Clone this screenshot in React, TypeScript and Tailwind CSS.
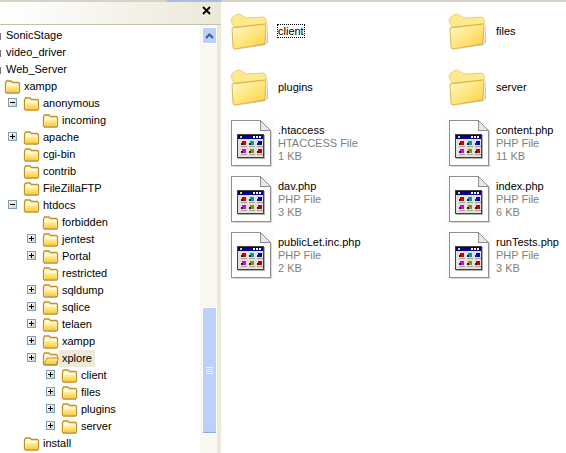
import React from "react";

type Row = { t: string; d: number; box?: "+" | "-"; open?: boolean; sel?: boolean; none?: boolean };
const rows: Row[] = [
  { t: "SonicStage", d: -1, none: true },
  { t: "video_driver", d: -1, none: true },
  { t: "Web_Server", d: -1, none: true },
  { t: "xampp", d: 0 },
  { t: "anonymous", d: 1, box: "-" },
  { t: "incoming", d: 2 },
  { t: "apache", d: 1, box: "+" },
  { t: "cgi-bin", d: 1 },
  { t: "contrib", d: 1 },
  { t: "FileZillaFTP", d: 1 },
  { t: "htdocs", d: 1, box: "-" },
  { t: "forbidden", d: 2 },
  { t: "jentest", d: 2, box: "+" },
  { t: "Portal", d: 2, box: "+" },
  { t: "restricted", d: 2 },
  { t: "sqldump", d: 2, box: "+" },
  { t: "sqlice", d: 2, box: "+" },
  { t: "telaen", d: 2, box: "+" },
  { t: "xampp", d: 2, box: "+" },
  { t: "xplore", d: 2, box: "+", open: true, sel: true },
  { t: "client", d: 3, box: "+" },
  { t: "files", d: 3, box: "+" },
  { t: "plugins", d: 3, box: "+" },
  { t: "server", d: 3, box: "+" },
  { t: "install", d: 1 },
];

const tiles = [
  { n: "client", folder: true, focus: true },
  { n: "files", folder: true },
  { n: "plugins", folder: true },
  { n: "server", folder: true },
  { n: ".htaccess", k: "HTACCESS File", s: "1 KB" },
  { n: "content.php", k: "PHP File", s: "11 KB" },
  { n: "dav.php", k: "PHP File", s: "3 KB" },
  { n: "index.php", k: "PHP File", s: "6 KB" },
  { n: "publicLet.inc.php", k: "PHP File", s: "2 KB" },
  { n: "runTests.php", k: "PHP File", s: "3 KB" },
];

function SmallFolder({ open }: { open?: boolean }) {
  return (
    <svg width="17" height="14" viewBox="0 0 17 14" className="shrink-0">
      <defs>
        <linearGradient id="sf" x1="0" y1="0" x2="0" y2="1">
          <stop offset="0" stopColor="#fff0a0" />
          <stop offset="1" stopColor="#fccb3e" />
        </linearGradient>
      </defs>
      <path d="M1.5 3 L2.5 1 H7 L8.5 2.5 H14.5 L15.5 3.5 V12 L14.5 13 H2.5 L1.5 12 Z" fill="#fff8d0" stroke="#c08f28" strokeWidth="1.3" />
      {open ? (
        <path d="M5 6 H16.5 L14 12.5 H2 Z" fill="url(#sf)" stroke="#c08f28" />
      ) : (
        <path d="M2.5 6 H14.5 V12 H2.5 Z" fill="url(#sf)" />
      )}
    </svg>
  );
}

function BigFolder() {
  return (
    <svg width="38" height="38" viewBox="0 0 38 38">
      <defs>
        <linearGradient id="bf" x1="0" y1="0" x2="1" y2="1">
          <stop offset="0" stopColor="#fffad0" />
          <stop offset="0.5" stopColor="#ffe680" />
          <stop offset="1" stopColor="#fcce40" />
        </linearGradient>
      </defs>
      <path d="M4 38 L38 31 V8 L36 33 Z" fill="#aaa696" opacity="0.6" />
      <path d="M1 9 L2 6 Q4 3 8 2 L11 3 L16 6 L34 5 L36 7 V12 L4 15 Z" fill="#fde98e" stroke="#eec44e" strokeWidth="0.8" />
      <path d="M2 16 L35 12 Q36 12 36 13 L35 31 Q35 32 34 32 L5 37 Q3 37 3 35 Z" fill="url(#bf)" stroke="#d3a22c" strokeWidth="0.8" />
    </svg>
  );
}

function FileIcon() {
  const cells = ["#d00000", "#009aa0", "#0000d0", "#e000e0", "#909000", "#c00000"];
  return (
    <svg width="48" height="48" viewBox="0 0 48 48" shapeRendering="crispEdges">
      <rect width="48" height="48" fill="#fbfbfa" />
      <path d="M5.5 1.5 H34.5 L44.5 11.5 V46.5 H5.5 Z" fill="#ffffff" stroke="#8f8f8f" />
      <path d="M34.5 1.5 V11.5 H44.5 Z" fill="#e8e8e4" stroke="#8f8f8f" />
      <rect x="45" y="12" width="1" height="35" fill="#d8d8d2" />
      <rect x="7" y="47" width="39" height="1" fill="#d8d8d2" />
      <rect x="12" y="16" width="27" height="24" fill="#b0b0a8" />
      <rect x="11" y="15" width="27" height="24" fill="#404040" />
      <rect x="12" y="16" width="25" height="22" fill="#e2e2da" />
      <rect x="12" y="16" width="25" height="4" fill="#000080" />
      <rect x="14" y="17" width="2" height="2" fill="#f0e800" />
      <rect x="27" y="17" width="2" height="2" fill="#ffffff" />
      <rect x="30" y="17" width="2" height="2" fill="#ffffff" />
      <rect x="33" y="17" width="2" height="2" fill="#ffffff" />
      {cells.map((c, i) => {
        const x = 15 + (i % 3) * 8;
        const y = 22 + Math.floor(i / 3) * 8;
        return (
          <g key={i}>
            <rect x={x + 1} y={y} width="4" height="4" fill={c} />
            <rect x={x} y={y + 2} width="2" height="2" fill="#202020" />
            <rect x={x} y={y + 5} width="6" height="1" fill="#a0a0a0" />
          </g>
        );
      })}
    </svg>
  );
}

function Expander({ kind }: { kind: "+" | "-" }) {
  return (
    <span className="relative block h-[9px] w-[9px] border border-[#7f9db9] bg-gradient-to-br from-white to-[#d4d0c8]">
      <span className="absolute left-[1px] top-[3px] h-[1px] w-[5px] bg-black" />
      {kind === "+" && <span className="absolute left-[3px] top-[1px] h-[5px] w-[1px] bg-black" />}
    </span>
  );
}

function TreeRow({ r }: { r: Row }) {
  if (r.none) {
    return (
      <div className="relative flex h-[17px] items-center pl-[6px] leading-[17px]">
        <span className="absolute left-0 top-[6px] h-[7px] w-[1px] bg-[#777]" />
        <span>{r.t}</span>
      </div>
    );
  }
  const indent = [4, 23, 42, 61][r.d];
  return (
    <div className="relative flex h-[17px] items-center" style={{ paddingLeft: indent }}>
      {r.box && (
        <span className="absolute top-[3px]" style={{ left: indent - 15 }}>
          <Expander kind={r.box} />
        </span>
      )}
      <SmallFolder open={r.open} />
      <span className={r.sel ? "bg-[#ece9d8] pl-[3px] pr-[3px] leading-[17px]" : "pl-[3px] pr-[3px] leading-[17px]"}>{r.t}</span>
    </div>
  );
}

function Scrollbar() {
  return (
    <div className="flex w-[17px] shrink-0 flex-col bg-[#f8f7f2] pl-[2px] pt-[2px]">
      <div className="flex h-[17px] w-[15px] items-center justify-center rounded-[2px] border border-white bg-[#bcd0f8]">
        <svg width="9" height="6" viewBox="0 0 9 6">
          <path d="M1 5 L4.5 1.5 L8 5" fill="none" stroke="#3a5a9a" strokeWidth="2" />
        </svg>
      </div>
      <div className="mt-[263px] flex h-[126px] w-[15px] flex-col items-center justify-center gap-[1px] rounded-[2px] border border-white border-b-[#8fa8dc] bg-[#bcd0f8]">
        <span className="h-[1px] w-[7px] bg-[#edf2fe]" />
        <span className="h-[1px] w-[7px] bg-[#edf2fe]" />
        <span className="h-[1px] w-[7px] bg-[#edf2fe]" />
        <span className="h-[1px] w-[7px] bg-[#edf2fe]" />
      </div>
    </div>
  );
}

export default function App() {
  return (
    <div className="flex h-[453px] w-[566px] flex-col overflow-hidden bg-white text-[11px] text-black [font-family:'Liberation_Sans',sans-serif]">
      <div className="flex h-[2px] shrink-0">
        <div className="w-[167px] bg-[#d6d3c4]" />
        <div className="w-[55px] bg-[#a9bde0]" />
        <div className="flex-1 bg-[#d6d3c4]" />
      </div>
      <div className="flex min-h-0 flex-1">
        <div className="flex w-[221px] shrink-0 flex-col bg-[#ece9d8]">
          <div className="flex h-[23px] shrink-0 items-start justify-end border-b border-[#c4c1ae] bg-gradient-to-r from-white to-[#ece9d8] pr-[10px] pt-[4px]">
            <svg width="9" height="9" viewBox="0 0 9 9">
              <path d="M1 1 L8 8 M8 1 L1 8" stroke="#000" strokeWidth="1.8" />
            </svg>
          </div>
          <div className="flex min-h-0 flex-1 pr-[4px]">
            <div className="relative min-w-0 flex-1 overflow-hidden bg-white pt-[2px]">
              {rows.map((r, i) => (
                <TreeRow key={i} r={r} />
              ))}
            </div>
            <Scrollbar />
          </div>
        </div>
        <div className="grid flex-1 auto-rows-[56px] grid-cols-[218px_1fr] content-start pl-[5px] pt-[1px]">
          {tiles.map((t) => (
            <div key={t.n} className="flex items-center">
              <div className="flex w-[52px] shrink-0 justify-start">
                {t.folder ? (
                  <div className="ml-[4px]">
                    <BigFolder />
                  </div>
                ) : (
                  <FileIcon />
                )}
              </div>
              <div className="leading-[13px]">
                <div>
                  <span className={t.focus ? "outline-1 outline-dotted outline-black" : ""}>{t.n}</span>
                </div>
                {t.k && <div className="text-[#808080]">{t.k}</div>}
                {t.s && <div className="text-[#808080]">{t.s}</div>}
              </div>
            </div>
          ))}
        </div>
      </div>
    </div>
  );
}
